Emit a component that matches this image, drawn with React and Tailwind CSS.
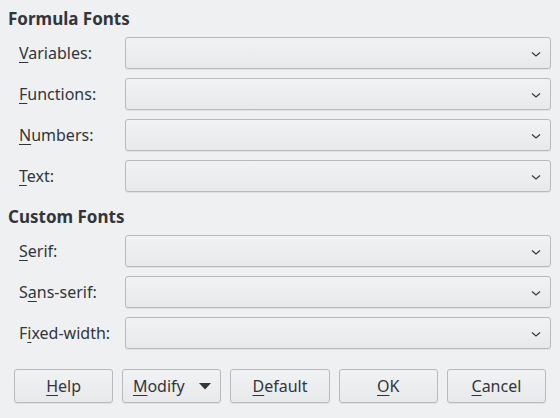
import React from 'react';

const Combo = () => (
    <div className="relative flex-1 h-[32px] rounded-[3px] border border-[#b8babc] bg-gradient-to-b from-[#f1f2f3] to-[#e8e9ea] shadow-[0_1px_0_rgba(0,0,0,0.06)]">
        <svg className="absolute right-[9px] top-[12px]" width="10" height="8" viewBox="0 0 10 8">
            <path d="M1 2.5 L5 6 L9 2.5" fill="none" stroke="#31363b" strokeWidth="1.1" />
        </svg>
    </div>
);

const Row = ({ pre, u, post }) => (
    <div className="flex items-center h-[32px]">
        <div className="w-[125px] shrink-0 pl-[19px] text-[16px] text-[#31363b]">
            {pre}<span className="underline underline-offset-[3px]">{u}</span>{post}
        </div>
        <Combo />
    </div>
);

const Btn = ({ u, post, arrow }) => (
    <button className="flex-1 h-[34px] flex items-center justify-center rounded-[3px] border border-[#b8babc] bg-gradient-to-b from-[#f1f2f3] to-[#e8e9ea] text-[16px] text-[#31363b] shadow-[0_1px_0_rgba(0,0,0,0.06)]">
        <span>
            <span className="underline underline-offset-[3px]">{u}</span>{post}
        </span>
        {arrow && (
            <svg className="ml-[14px]" width="12" height="7" viewBox="0 0 12 7">
                <path d="M0 0 L12 0 L6 6.5 Z" fill="#31363b" />
            </svg>
        )}
    </button>
);

export default function App() {
    return (
        <div className="w-[560px] h-[418px] bg-[#eff0f1] flex flex-col pt-[9px] pr-[9px] font-['Noto_Sans',sans-serif]">
            <div className="h-[20px] leading-[20px] pl-[8px] text-[17px] font-bold text-[#31363b]">Formula Fonts</div>
            <div className="flex flex-col gap-[9px] mt-[8px]">
                <Row pre="" u="V" post="ariables:" />
                <Row pre="" u="F" post="unctions:" />
                <Row pre="" u="N" post="umbers:" />
                <Row pre="" u="T" post="ext:" />
            </div>
            <div className="h-[20px] leading-[20px] pl-[8px] mt-[15px] text-[17px] font-bold text-[#31363b]">Custom Fonts</div>
            <div className="flex flex-col gap-[9px] mt-[8px]">
                <Row pre="" u="S" post="erif:" />
                <Row pre="S" u="a" post="ns-serif:" />
                <Row pre="F" u="i" post="xed-width:" />
            </div>
            <div className="flex gap-[9px] mt-[20px] pl-[14px] pr-[5px]">
                <Btn u="H" post="elp" />
                <Btn u="M" post="odify" arrow />
                <Btn u="D" post="efault" />
                <Btn u="O" post="K" />
                <Btn u="C" post="ancel" />
            </div>
        </div>
    );
}
